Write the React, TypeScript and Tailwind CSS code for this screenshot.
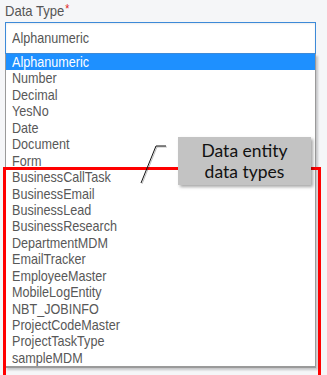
import React from "react";

const OPTIONS = [
  "Alphanumeric",
  "Number",
  "Decimal",
  "YesNo",
  "Date",
  "Document",
  "Form",
  "BusinessCallTask",
  "BusinessEmail",
  "BusinessLead",
  "BusinessResearch",
  "DepartmentMDM",
  "EmailTracker",
  "EmployeeMaster",
  "MobileLogEntity",
  "NBT_JOBINFO",
  "ProjectCodeMaster",
  "ProjectTaskType",
  "sampleMDM",
];

const SANS = "font-['Liberation_Sans',Arial,sans-serif]";
// the source font is a narrow Arial-like face
const NARROW = "inline-block origin-left scale-x-[0.84] whitespace-nowrap";

export default function App() {
  return (
    <div className="relative h-[375px] w-[327px] overflow-hidden bg-[#f5f6f8]">
      <div className={`flex flex-col pl-[5px] pr-[11px] pt-[1px] ${SANS}`}>
        <div className="flex h-[21px] items-center text-[15px] text-[#555]">
          <span className="inline-block origin-left scale-x-[0.87] whitespace-nowrap">
            Data Type<span className="ml-[1px] align-top text-[12px] text-[#e02020]">*</span>
          </span>
        </div>
        <div className="flex h-[32px] items-center border border-[#3d8ad8] bg-white pl-[6px] text-[15px] text-[#555] shadow-[inset_0_1px_2px_rgba(0,0,0,0.08)]">
          <span className={NARROW}>Alphanumeric</span>
        </div>
        <ul className="border-x border-b-2 border-[#9a9a9a] bg-white shadow-[2px_2px_2px_rgba(0,0,0,0.2)]">
          {OPTIONS.map((o, i) => (
            <li
              key={o}
              className={`h-[16.45px] pl-[6px] text-[15px] leading-[16.45px] ${
                i === 0 ? "bg-[#1e90ff] text-white" : "text-[#585858]"
              }`}
            >
              <span className={NARROW}>{o}</span>
            </li>
          ))}
        </ul>
      </div>

      {/* annotation: red outline around the data entity types */}
      <div className="absolute left-[3px] top-[167px] h-[230px] w-[318px] border-[3px] border-[#ff0000]" />

      {/* callout leader line */}
      <svg className="absolute left-0 top-0" width="327" height="375">
        <polyline points="166,146 156,146 141,183" fill="none" stroke="rgba(0,0,0,0.25)" strokeWidth="1" transform="translate(1,1)" />
        <polyline points="166,146 156,146 141,183" fill="none" stroke="#111" strokeWidth="1" />
      </svg>

      {/* callout box */}
      <div className="absolute left-[178px] top-[137px] flex h-[48px] w-[133px] flex-col items-center justify-center bg-[#c3c3c3] font-['Lato',sans-serif] text-[17.5px] leading-[21px] text-[#111] shadow-[2px_2px_3px_rgba(0,0,0,0.35)]">
        <span>Data entity</span>
        <span>data types</span>
      </div>
    </div>
  );
}
